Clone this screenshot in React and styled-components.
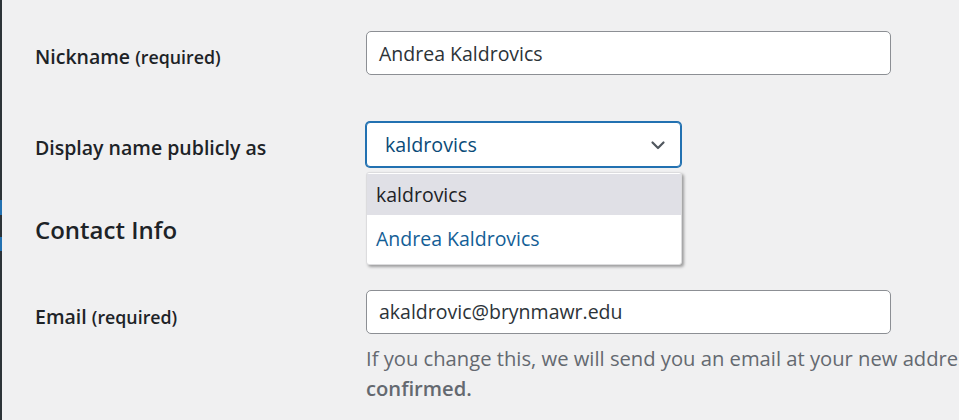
import React from 'react';
import styled, { createGlobalStyle } from 'styled-components';

const GlobalStyle = createGlobalStyle`
  html, body {
    margin: 0;
    padding: 0;
    background: #f0f0f1;
    overflow: hidden;
  }
  body {
    font-family: "Open Sans", "Noto Sans", sans-serif;
    color: #1d2327;
  }
`;

const Page = styled.div`
  display: flex;
  width: 959px;
  height: 420px;
  overflow: hidden;
`;

const MenuEdge = styled.div`
  width: 2px;
  flex: none;
  display: flex;
  flex-direction: column;
  background: #2c3338;
`;

const EdgeMark = styled.div`
  height: ${p => p.h}px;
  margin-top: ${p => p.top}px;
  background: #2271b1;
`;

const Content = styled.div`
  flex: 1;
  min-width: 0;
  padding-left: 33px;
`;

const Row = styled.div`
  display: grid;
  grid-template-columns: 331px 1fr;
  align-items: start;
  padding-top: ${p => p.top}px;
`;

const Label = styled.label`
  font-size: 19.5px;
  font-weight: 600;
  line-height: 24px;
  padding-top: ${p => p.offset}px;
  white-space: nowrap;
`;

const Small = styled.span`
  font-size: 17.8px;
`;

const Field = styled.div`
  position: relative;
`;

const TextInput = styled.div`
  box-sizing: border-box;
  width: ${p => p.w}px;
  height: 44px;
  padding: 0 12px;
  display: flex;
  align-items: center;
  background: #fff;
  border: 1px solid #8c8f94;
  border-radius: 5px;
  font-size: 19.5px;
  color: #2c3338;
`;

const Select = styled.div`
  box-sizing: border-box;
  width: 315px;
  height: 45px;
  padding: 0 12px 0 18px;
  display: flex;
  align-items: center;
  justify-content: space-between;
  background: #fff;
  border: 1px solid #2271b1;
  box-shadow: 0 0 0 1px #2271b1;
  border-radius: 4px;
  font-size: 19.7px;
  color: #0a4b78;
`;

const Menu = styled.ul`
  position: absolute;
  top: 50px;
  left: 0;
  width: 314px;
  margin: 0;
  padding: 1px 0 2px;
  list-style: none;
  background: #fff;
  border: 1px solid #dcdcde;
  border-radius: 3px;
  box-shadow: 2px 2px 3px rgba(0, 0, 0, 0.35);
  z-index: 2;
`;

const Option = styled.li`
  height: ${p => p.h}px;
  padding-left: 9px;
  display: flex;
  align-items: center;
  font-size: 19.5px;
  color: ${p => (p.active ? '#1d2327' : '#135e96')};
  background: ${p => (p.active ? '#e0e0e6' : '#fff')};
`;

const Heading = styled.h2`
  margin: 0;
  padding-top: ${p => p.top}px;
  font-size: 24px;
  font-weight: 600;
  line-height: 30px;
`;

const Description = styled.p`
  margin: 9px 0 0;
  font-size: 20.2px;
  line-height: 30px;
  color: #646970;
  white-space: nowrap;

  strong {
    font-weight: 600;
  }
`;

const Chevron = () => (
  <svg width="20" height="20" viewBox="0 0 20 20" fill="none">
    <path d="M4.5 7.5l5.5 5.5 5.5-5.5" stroke="#50575e" strokeWidth="2.2" strokeLinecap="round" strokeLinejoin="round" />
  </svg>
);

export default function App() {
  return (
    <>
      <GlobalStyle />
      <Page>
        <MenuEdge>
          <EdgeMark top={200} h={15} />
          <EdgeMark top={22} h={14} />
        </MenuEdge>
        <Content>
          <Row top={31}>
            <Label offset={13.5}>
              Nickname <Small>(required)</Small>
            </Label>
            <TextInput w={525}>Andrea Kaldrovics</TextInput>
          </Row>

          <Row top={47}>
            <Label offset={13.5}>Display name publicly as</Label>
            <Field>
              <Select>
                kaldrovics
                <Chevron />
              </Select>
              <Menu>
                <Option active h={41}>kaldrovics</Option>
                <Option h={47}>Andrea Kaldrovics</Option>
              </Menu>
            </Field>
          </Row>

          <Heading top={47.7}>Contact Info</Heading>

          <Row top={45.3}>
            <Label offset={15.5}>
              Email <Small>(required)</Small>
            </Label>
            <div>
              <TextInput w={525}>akaldrovic@brynmawr.edu</TextInput>
              <Description>
                If you change this, we will send you an email at your new address to confirm it.{' '}
                <strong>The new address will not become active until</strong>
                <br />
                <strong>confirmed.</strong>
              </Description>
            </div>
          </Row>
        </Content>
      </Page>
    </>
  );
}
